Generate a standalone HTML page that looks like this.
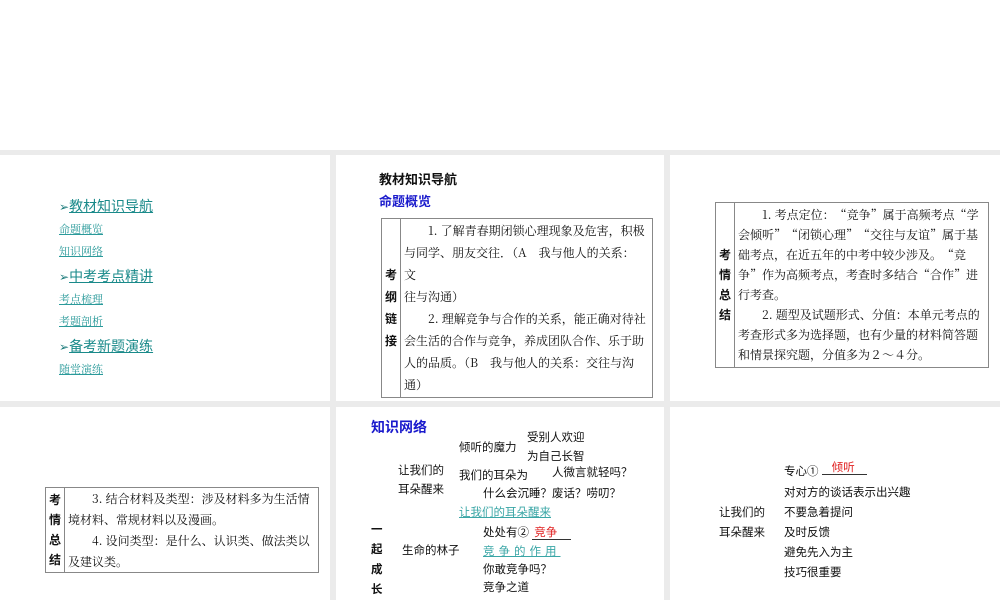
<!DOCTYPE html>
<html><head><meta charset="utf-8"><style>
body{margin:0;width:1000px;height:600px;background:#ebebeb;position:relative;overflow:hidden;font-family:"Liberation Sans","Noto Sans CJK SC",sans-serif;}
.top{position:absolute;left:0;top:0;width:1000px;height:150px;background:#fff}
.p{position:absolute;background:#fff;overflow:hidden}
.a{position:absolute;white-space:nowrap}
.lk{color:#2a9a9a;text-decoration:underline;font-family:"Noto Serif CJK SC",serif;font-size:11px}
.h{color:#1a8a8a;text-decoration:underline;font-size:14px}
.ar{color:#1a7a7a;font-size:12px;text-decoration:none}
table{border-collapse:collapse;position:absolute}
td{border:1px solid #888;font-family:"Noto Serif CJK SC",serif;font-size:12px;line-height:21px;color:#111;vertical-align:middle;padding:0 3px;white-space:nowrap}
td.l{font-family:"Noto Sans CJK SC",sans-serif;font-weight:bold;text-align:center;width:14px;padding:0 2px}
.s{font-size:11.5px;color:#111}
</style></head><body>
<div class="top"></div>
<div class="p" style="left:0;top:155px;width:330px;height:246px">
<div class="a" style="left:59px;top:41px"><span class="ar">➢</span><span class="h">教材知识导航</span></div>
<div class="a lk" style="left:59px;top:66px">命题概览</div>
<div class="a lk" style="left:59px;top:88px">知识网络</div>
<div class="a" style="left:59px;top:111px"><span class="ar">➢</span><span class="h">中考考点精讲</span></div>
<div class="a lk" style="left:59px;top:136px">考点梳理</div>
<div class="a lk" style="left:59px;top:158px">考题剖析</div>
<div class="a" style="left:59px;top:181px"><span class="ar">➢</span><span class="h">备考新题演练</span></div>
<div class="a lk" style="left:59px;top:206px">随堂演练</div>
</div>
<div class="p" style="left:336px;top:155px;width:328px;height:246px">
<div class="a" style="left:43px;top:14px;font-size:13px;font-weight:bold;color:#111">教材知识导航</div>
<div class="a" style="left:43px;top:36px;font-size:13px;font-weight:bold;color:#1a1acc">命题概览</div>
<table style="left:45px;top:63px;width:272px;height:180px"><tr><td class="l" style="line-height:22px">考<br>纲<br>链<br>接</td><td style="line-height:22px">&emsp;&emsp;1. 了解青春期闭锁心理现象及危害，积极<br>与同学、朋友交往．（A　我与他人的关系：<br>文<br>往与沟通）<br>&emsp;&emsp;2. 理解竞争与合作的关系，能正确对待社<br>会生活的合作与竞争，养成团队合作、乐于助<br>人的品质。（B　我与他人的关系：交往与沟<br>通）</td></tr></table>
</div>
<div class="p" style="left:670px;top:155px;width:330px;height:246px">
<table style="left:45px;top:47px;width:274px;height:166px"><tr><td class="l" style="line-height:20px">考<br>情<br>总<br>结</td><td style="line-height:20px">&emsp;&emsp;1. 考点定位：“竞争”属于高频考点“学<br>会倾听”“闭锁心理”“交往与友谊”属于基<br>础考点，在近五年的中考中较少涉及。“竞<br>争”作为高频考点，考查时多结合“合作”进<br>行考查。<br>&emsp;&emsp;2. 题型及试题形式、分值：本单元考点的<br>考查形式多为选择题，也有少量的材料简答题<br>和情景探究题，分值多为２～４分。</td></tr></table>
</div>
<div class="p" style="left:0;top:407px;width:330px;height:193px">
<table style="left:45px;top:80px;width:274px;height:86px"><tr><td class="l" style="line-height:20px">考<br>情<br>总<br>结</td><td style="line-height:21px">&emsp;&emsp;3. 结合材料及类型：涉及材料多为生活情<br>境材料、常规材料以及漫画。<br>&emsp;&emsp;4. 设问类型：是什么、认识类、做法类以<br>及建议类。</td></tr></table>
</div>
<div class="p" style="left:336px;top:407px;width:328px;height:193px">
<div class="a" style="left:35px;top:10px;font-size:14px;font-weight:bold;color:#1a1acc">知识网络</div>
<div class="a s" style="left:123px;top:32px">倾听的魔力</div>
<div class="a s" style="left:191px;top:22px">受别人欢迎</div>
<div class="a s" style="left:191px;top:41px">为自己长智</div>
<div class="a s" style="left:62px;top:55px">让我们的</div>
<div class="a s" style="left:62px;top:74px">耳朵醒来</div>
<div class="a s" style="left:123px;top:60px">我们的耳朵为</div>
<div class="a s" style="left:216px;top:57px">人微言就轻吗？</div>
<div class="a s" style="left:147px;top:78px">什么会沉睡？</div>
<div class="a s" style="left:216px;top:78px">废话？唠叨？</div>
<div class="a s" style="left:123px;top:97px;color:#3aa6a6;text-decoration:underline">让我们的耳朵醒来</div>
<div class="a s" style="left:35px;top:113px;font-weight:bold;line-height:20px">一<br>起<br>成<br>长</div>
<div class="a s" style="left:147px;top:117px">处处有②&nbsp;<span style="color:#e02020;border-bottom:1px solid #333;padding:0 14px 0 2px">竞争</span></div>
<div class="a s" style="left:66px;top:135px">生命的林子</div>
<div class="a s" style="left:147px;top:136px;color:#3aa6a6;text-decoration:underline;letter-spacing:4px">竞争的作用</div>
<div class="a s" style="left:147px;top:154px">你敢竞争吗？</div>
<div class="a s" style="left:147px;top:172px">竞争之道</div>
</div>
<div class="p" style="left:670px;top:407px;width:330px;height:193px">
<div class="a s" style="left:114px;top:56px">专心①&nbsp;<span style="color:#e02020;border-bottom:1px solid #333;padding:0 12px 0 10px;position:relative;top:-4px">倾听</span></div>
<div class="a s" style="left:114px;top:77px">对对方的谈话表示出兴趣</div>
<div class="a s" style="left:49px;top:97px">让我们的</div>
<div class="a s" style="left:114px;top:97px">不要急着提问</div>
<div class="a s" style="left:49px;top:117px">耳朵醒来</div>
<div class="a s" style="left:114px;top:117px">及时反馈</div>
<div class="a s" style="left:114px;top:137px">避免先入为主</div>
<div class="a s" style="left:114px;top:157px">技巧很重要</div>
</div>
</body></html>
